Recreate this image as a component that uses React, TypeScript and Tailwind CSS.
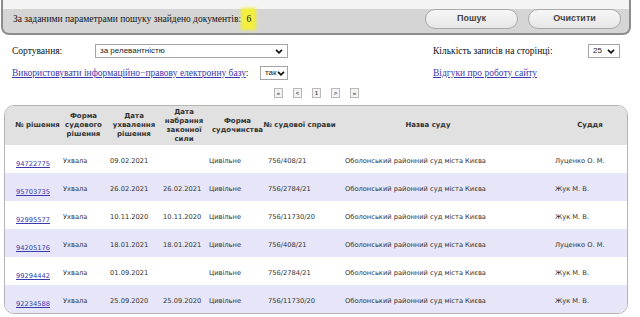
import React from 'react'

const ROWS = [
  { id: '94722775', form: 'Ухвала', date: '09.02.2021', legal: '', proc: 'Цивільне', cas: '756/408/21', court: 'Оболонський районний суд міста Києва', judge: 'Луценко О. М.' },
  { id: '95703735', form: 'Ухвала', date: '26.02.2021', legal: '26.02.2021', proc: 'Цивільне', cas: '756/2784/21', court: 'Оболонський районний суд міста Києва', judge: 'Жук М. В.' },
  { id: '92995577', form: 'Ухвала', date: '10.11.2020', legal: '10.11.2020', proc: 'Цивільне', cas: '756/11730/20', court: 'Оболонський районний суд міста Києва', judge: 'Жук М. В.' },
  { id: '94205176', form: 'Ухвала', date: '18.01.2021', legal: '18.01.2021', proc: 'Цивільне', cas: '756/408/21', court: 'Оболонський районний суд міста Києва', judge: 'Луценко О. М.' },
  { id: '99294442', form: 'Ухвала', date: '01.09.2021', legal: '', proc: 'Цивільне', cas: '756/2784/21', court: 'Оболонський районний суд міста Києва', judge: 'Жук М. В.' },
  { id: '92234588', form: 'Ухвала', date: '25.09.2020', legal: '25.09.2020', proc: 'Цивільне', cas: '756/11730/20', court: 'Оболонський районний суд міста Києва', judge: 'Жук М. В.' },
]

// column widths, data padding, header padding
const COLS = [
  { w: 'w-[55px]', pl: 'pl-[11px]', hp: 'pl-[10px] whitespace-nowrap', head: '№ рішення' },
  { w: 'w-[46px]', pl: 'pl-[3px]', hp: 'pl-[1px]', head: 'Форма судового рішення' },
  { w: 'w-[54px]', pl: 'pl-[4px]', hp: 'pl-[2px]', head: 'Дата ухвалення рішення' },
  { w: 'w-[46px]', pl: 'pl-[3px]', hp: 'pl-[2px]', head: 'Дата набрання законної сили' },
  { w: 'w-[59px]', pl: 'pl-[3px]', hp: 'pl-[4px]', head: 'Форма судочинства' },
  { w: 'w-[67px]', pl: 'pl-[3px]', hp: 'pl-[2px] whitespace-nowrap', head: '№ судової справи' },
  { w: 'w-[179px]', pl: 'pl-[13px]', hp: 'pl-[13px]', head: 'Назва суду' },
  { w: 'w-[116px]', pl: 'pl-[44px]', hp: 'pl-[42px]', head: 'Суддя' },
]

const serif = "font-[family-name:'Liberation_Serif',serif]"
const sans = "font-[family-name:'Liberation_Sans',Arial,sans-serif]"
const tab = "font-[family-name:'DejaVu_Sans',Verdana,sans-serif]"

function Chevron() {
  return (
    <svg width="8" height="5" viewBox="0 0 8 5" className="shrink-0">
      <polyline points="1,0.8 4,3.8 7,0.8" fill="none" stroke="#111" strokeWidth="1.7" />
    </svg>
  )
}

function Select({ value, w }: { value: string; w: string }) {
  return (
    <div className={`${w} h-[14px] border border-[#a5a5a5] bg-white flex items-center justify-between pl-[4px] pr-[4px] text-[8px] text-[#222] ${sans}`}>
      <span>{value}</span>
      <Chevron />
    </div>
  )
}

function PageBtn({ label }: { label: string }) {
  return (
    <div className={`w-[9px] h-[10px] border border-[#b9b9b9] bg-[#f3f3f3] flex items-center justify-center text-[6px] font-bold text-[#555] ${sans}`}>
      {label}
    </div>
  )
}

export default function App() {
  return (
    <div className="w-[640px] h-[317px] overflow-hidden bg-white">
      {/* Search summary panel */}
      <div className="ml-[1px] w-[630px] h-[35px] border-2 border-t-0 border-[#8d8d8d] rounded-b-[8px] bg-[#d5d5d5] flex flex-col overflow-hidden">
        <div className="h-[10px] bg-[#f4f4f4]" />
        <div className="flex-1 flex items-center justify-between pl-[10px] pr-[8px] pb-[4px]">
          <p className={`text-[9.5px] text-[#111] ${serif}`}>
            За заданими параметрами пошуку знайдено документів:{' '}
            <span className="bg-[#f3ef3c] px-[3px] py-[4px] shadow-[0_0_3px_2px_#f3ef3c]">6</span>
          </p>
          <div className="flex gap-[10px]">
            {['Пошук', 'Очистити'].map(b => (
              <div key={b} className={`w-[93px] h-[20px] rounded-full border border-[#a8a8a8] bg-gradient-to-b from-[#f7f7f7] to-[#e6e6e6] flex items-center justify-center text-[9px] font-bold text-[#444] ${sans}`}>
                {b}
              </div>
            ))}
          </div>
        </div>
      </div>

      {/* Options */}
      <div className={`pl-[12px] pt-[9px] text-[9.5px] text-[#111] ${serif}`}>
        <div className="flex items-center h-[14px]">
          <span className="w-[83px]">Сортування:</span>
          <Select value="за релевантністю" w="w-[193px]" />
          <span className="ml-[145px] w-[155px]">Кількість записів на сторінці:</span>
          <Select value="25" w="w-[32px]" />
        </div>
        <div className="flex items-center h-[14px] mt-[8px]">
          <span className="w-[248px] whitespace-nowrap">
            <span className="text-[#3a3aae] underline">Використовувати інформаційно−правову електронну базу</span>:
          </span>
          <Select value="так" w="w-[28px]" />
          <span className="ml-[145px] text-[#3a3aae] underline">Відгуки про роботу сайту</span>
        </div>
        <div className="flex gap-[10px] ml-[262px] mt-[8px]">
          {['«', '<', '1', '>', '»'].map(p => <PageBtn key={p} label={p} />)}
        </div>
      </div>

      {/* Results table */}
      <div className={`ml-[4px] mt-[7px] w-[624px] border border-[#b4b4b4] rounded-[10px] overflow-hidden ${tab}`}>
        <div className="flex h-[39px] bg-[#e1e1e1]">
          {COLS.map(c => (
            <div key={c.head} className={`${c.w} ${c.hp} flex items-center justify-center text-center text-[7px] leading-[9px] font-bold text-[#333]`}>
              <span className="block">{c.head}</span>
            </div>
          ))}
        </div>
        {ROWS.map((r, i) => {
          const vals = [r.id, r.form, r.date, r.legal, r.proc, r.cas, r.court, r.judge]
          return (
            <div key={r.id} className={`flex h-[28px] items-center ${i % 2 ? 'bg-[#e6e6f8]' : 'bg-white'}`}>
              {vals.map((v, j) => (
                <div key={j} className={`${COLS[j].w} ${COLS[j].pl} text-[6.7px] text-[#333] whitespace-nowrap ${j === 0 ? 'pt-[10px]' : 'pt-[4px]'}`}>
                  {j === 0 ? <span className="text-[#3a3aae] underline">{v}</span> : v}
                </div>
              ))}
            </div>
          )
        })}
      </div>
    </div>
  )
}
